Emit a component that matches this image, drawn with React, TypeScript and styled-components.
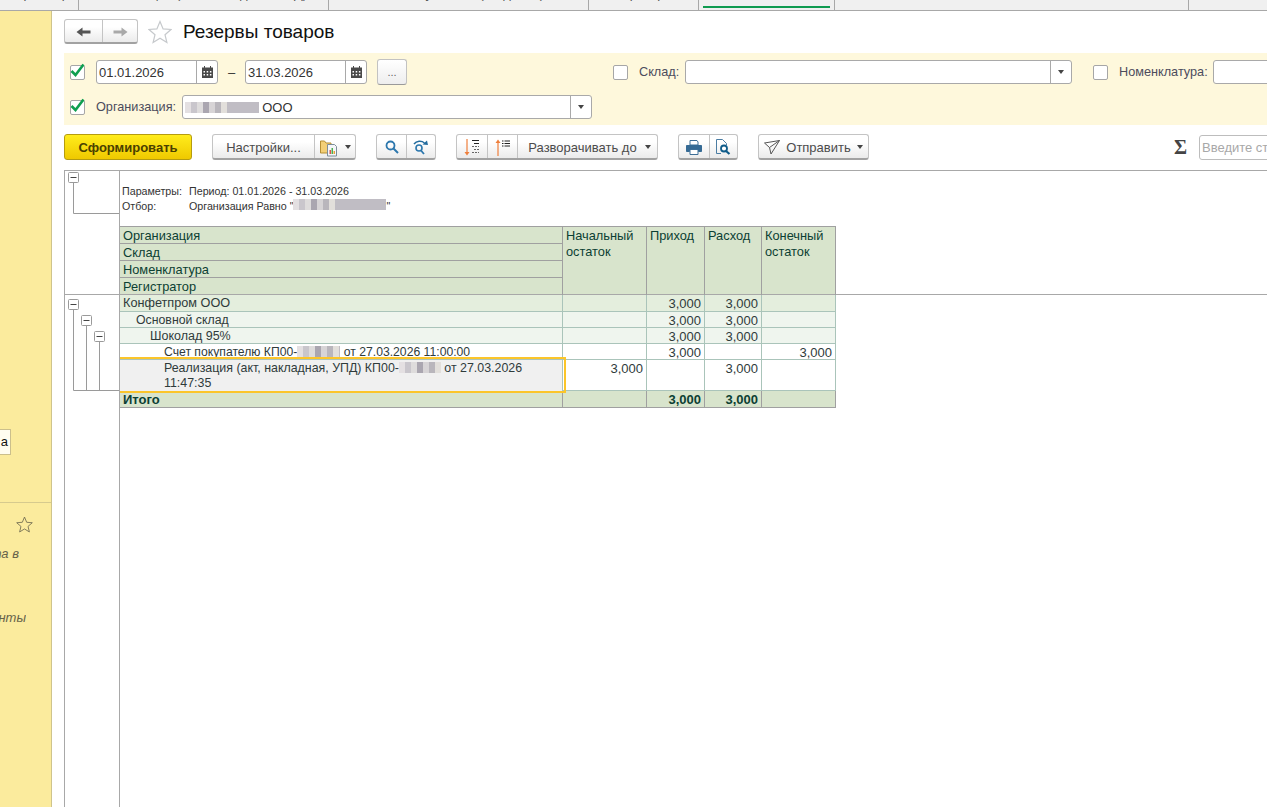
import React from "react";
import styled, { createGlobalStyle } from "styled-components";

const GlobalStyle = createGlobalStyle`
  html, body { margin: 0; padding: 0; background: #fff; }
  body { font-family: "Liberation Sans", Arial, sans-serif; font-size: 13px; }
`;

const Page = styled.div`
  width: 1267px;
  height: 807px;
  overflow: hidden;
  display: flex;
  flex-direction: column;
`;

/* tabs */
const TabStrip = styled.div`
  height: 11px;
  box-sizing: border-box;
  flex-shrink: 0;
  display: flex;
  background: #f0f0f0;
  border-bottom: 1px solid #a8a8a8;
  overflow: hidden;
`;
const Tab = styled.div<{ $w: number; $last?: boolean }>`
  width: ${(p) => p.$w}px;
  flex-shrink: 0;
  box-sizing: border-box;
  height: 10px;
  overflow: hidden;
  text-align: center;
  white-space: nowrap;
  color: #555;
  border-right: ${(p) => (p.$last ? "none" : "1px solid #a8a8a8")};
`;
const TabLabel = styled.div`
  margin-top: -13px;
  line-height: 13px;
`;
const ActiveBar = styled.div`
  height: 8px;
  box-sizing: border-box;
  margin: 0 4px;
  border-bottom: 2px solid #0f9b50;
`;

const Body = styled.div`
  flex: 1;
  display: flex;
  min-height: 0;
`;

/* left panel */
const Side = styled.aside`
  width: 52px;
  flex-shrink: 0;
  box-sizing: border-box;
  background: #fbeb9d;
  border-right: 1px solid #cfc48c;
  display: flex;
  flex-direction: column;
`;
const SideTop = styled.div`
  height: 492px;
  box-sizing: border-box;
  padding-top: 418px;
  border-bottom: 1px solid #d6ca8e;
`;
const Chip = styled.div`
  width: 11px;
  height: 26px;
  box-sizing: border-box;
  background: #fffdf0;
  border: 1px solid #cbbf8c;
  border-left: none;
  line-height: 24px;
  text-align: right;
  padding-right: 2px;
  color: #111;
`;
const SideStar = styled.div`
  display: flex;
  justify-content: flex-end;
  padding: 13px 18px 0 0;
`;
const SideText = styled.div<{ $w: number; $top: number }>`
  width: ${(p) => p.$w}px;
  margin-top: ${(p) => p.$top}px;
  overflow: hidden;
  direction: rtl;
  white-space: nowrap;
  font-style: italic;
  line-height: 15px;
  color: #66624a;
`;

/* main */
const Main = styled.main`
  flex: 1;
  min-width: 0;
  display: flex;
  flex-direction: column;
  padding: 8px 0 0 12px;
  overflow: hidden;
`;
const Heading = styled.div`
  display: flex;
  align-items: center;
  height: 25px;
  flex-shrink: 0;
`;
const Title = styled.h1`
  margin: 0 0 0 11px;
  font-size: 19px;
  font-weight: 400;
  line-height: 25px;
  color: #111;
`;
const StarSlot = styled.div`
  display: flex;
  margin-left: 10px;
`;

const Filters = styled.div`
  margin-top: 9px;
  height: 72px;
  box-sizing: border-box;
  flex-shrink: 0;
  padding: 7px 0 0 6px;
  background: #fef8dc;
  display: flex;
  flex-direction: column;
  gap: 11px;
`;
const FilterRow = styled.div`
  display: flex;
  align-items: center;
  height: 24px;
`;
const FilterGroup = styled.div<{ $w?: number }>`
  display: flex;
  align-items: center;
  flex-shrink: 0;
  width: ${(p) => (p.$w ? `${p.$w}px` : "auto")};
`;
const CheckBox = styled.div`
  width: 15px;
  height: 15px;
  flex-shrink: 0;
  box-sizing: border-box;
  margin-right: 11px;
  background: #fff;
  border: 1px solid #a6a6a6;
  border-radius: 2px;
  display: flex;
  align-items: center;
  justify-content: center;
`;
const Label = styled.span`
  color: #4c4c5c;
  font-size: 12.7px;
  white-space: nowrap;
  margin-right: 5.6px;
  padding-bottom: 1px;
`;
const Field = styled.div<{ $w?: number }>`
  height: 24px;
  box-sizing: border-box;
  flex: ${(p) => (p.$w ? "none" : "1")};
  width: ${(p) => (p.$w ? `${p.$w}px` : "auto")};
  display: flex;
  background: #fff;
  border: 1px solid #a9a9a9;
  border-radius: 3px;
`;
const FieldText = styled.div`
  flex: 1;
  padding-left: 2px;
  line-height: 23px;
  color: #333;
  white-space: nowrap;
  overflow: hidden;
`;
const Addon = styled.div`
  width: 20px;
  flex-shrink: 0;
  border-left: 1px solid #a9a9a9;
  display: flex;
  align-items: center;
  justify-content: center;
`;
const Dash = styled.span`
  width: 27px;
  text-align: center;
  color: #333;
`;
const MoreButton = styled.div`
  width: 30px;
  height: 26px;
  box-sizing: border-box;
  margin-left: 10px;
  text-align: center;
  line-height: 24px;
  color: #666;
  font-size: 11px;
  background: linear-gradient(#ffffff, #eeeeee);
  border: 1px solid #c2c2c2;
  border-bottom-color: #9a9a9a;
  border-radius: 3px;
`;
const Caret = styled.span`
  width: 0;
  height: 0;
  flex-shrink: 0;
  border-left: 3.5px solid transparent;
  border-right: 3.5px solid transparent;
  border-top: 4px solid #444;
`;

const Toolbar = styled.div`
  margin-top: 9px;
  height: 26px;
  flex-shrink: 0;
  display: flex;
  gap: 20px;
`;
const MainButton = styled.div`
  width: 128px;
  height: 26px;
  box-sizing: border-box;
  flex-shrink: 0;
  text-align: center;
  line-height: 26px;
  font-weight: 700;
  color: #4a4000;
  background: linear-gradient(#ffec1c, #efc900);
  border: 1px solid #b59c10;
  border-radius: 3px;
`;
const ButtonGroup = styled.div`
  display: flex;
  flex-shrink: 0;
  height: 26px;
  box-sizing: border-box;
  background: linear-gradient(#ffffff 30%, #ebebeb);
  border: 1px solid #c4c4c4;
  border-bottom: 2px solid #a2a2a2;
  border-radius: 3px;
`;
const GroupCell = styled.div<{ $w: number; $first?: boolean; $gap?: number; $shift?: number }>`
  width: ${(p) => p.$w}px;
  box-sizing: border-box;
  padding: 1px 0 0 ${(p) => p.$shift ?? 0}px;
  display: flex;
  align-items: center;
  justify-content: center;
  gap: ${(p) => p.$gap ?? 7}px;
  color: #4c4c4c;
  white-space: nowrap;
  border-left: ${(p) => (p.$first ? "none" : "1px solid #c4c4c4")};
`;
const SearchZone = styled.div`
  margin-left: 285px;
  display: flex;
  align-items: center;
  gap: 12px;
  flex-shrink: 0;
`;
const SigmaMark = styled.span`
  width: 13px;
  font-family: "Liberation Serif", serif;
  font-weight: 700;
  font-size: 20px;
  line-height: 24px;
  color: #444;
`;
const SearchInput = styled.input`
  width: 200px;
  height: 25px;
  box-sizing: border-box;
  padding: 0 2px;
  border: 1px solid #bdbdbd;
  border-radius: 3px;
  outline: none;
  font: 13px "Liberation Sans", Arial, sans-serif;
  &::placeholder { color: #a8a8a8; opacity: 1; }
`;

/* report */
const Report = styled.section`
  margin-top: 10px;
  flex: 1;
  min-height: 0;
  display: flex;
  flex-direction: column;
  border-left: 1px solid #a8a8a8;
  border-top: 1px solid #a8a8a8;
`;
const ReportHead = styled.div`
  height: 124px;
  flex-shrink: 0;
  box-sizing: border-box;
  display: flex;
  border-bottom: 1px solid #a8a8a8;
`;
const ReportBody = styled.div`
  flex: 1;
  display: flex;
`;
const Gutter = styled.div`
  width: 55px;
  flex-shrink: 0;
  box-sizing: border-box;
  border-right: 1px solid #a8a8a8;
`;
const TreeSvg = styled.svg`
  display: block;
`;
const HeadContent = styled.div`
  display: flex;
  flex-direction: column;
`;
const Params = styled.div`
  height: 55px;
  box-sizing: border-box;
  padding: 13px 0 0 2px;
  font-size: 10.7px;
  line-height: 15px;
  color: #333;
`;
const ParamLine = styled.div`
  display: flex;
  white-space: nowrap;
`;
const ParamName = styled.span`
  width: 67px;
`;
const COLS = "443px 84px 58px 57px 74px";
const HeaderGrid = styled.div`
  display: grid;
  grid-template-columns: ${COLS};
  grid-template-rows: repeat(4, 17px);
  height: 68px;
  box-sizing: border-box;
  font-size: 12.8px;
  background: #d8e4cc;
  border-top: 1px solid #a0a0a0;
  color: #0c3f33;
`;
const HeaderName = styled.div<{ $last?: boolean }>`
  grid-column: 1;
  box-sizing: border-box;
  padding-left: 3px;
  line-height: 17px;
  border-right: 1px solid #a0a0a0;
  border-bottom: ${(p) => (p.$last ? "none" : "1px solid #a0a0a0")};
`;
const HeaderColumn = styled.div<{ $col: number }>`
  grid-column: ${(p) => p.$col};
  grid-row: 1 / span 4;
  box-sizing: border-box;
  padding: 1px 3px 0;
  line-height: 16px;
  border-right: 1px solid #a0a0a0;
`;
const Row = styled.div<{ $h: number; $bg: string; $total?: boolean; $line?: string }>`
  position: relative;
  display: grid;
  grid-template-columns: ${COLS};
  height: ${(p) => p.$h}px;
  box-sizing: border-box;
  background: ${(p) => p.$bg};
  color: ${(p) => (p.$total ? "#0c3f33" : "#2f3b3b")};
  font-weight: ${(p) => (p.$total ? 700 : 400)};
  border-bottom: 1px solid ${(p) => p.$line || "#aac4ba"};
`;
const NameCell = styled.div<{ $level?: number; $bg?: string; $line?: string; $size?: number }>`
  box-sizing: border-box;
  padding: 1px 4px 0 ${(p) => 3 + (p.$level || 0)}px;
  font-size: ${(p) => p.$size || 13}px;
  line-height: 15px;
  background: ${(p) => p.$bg || "transparent"};
  border-right: 1px solid ${(p) => p.$line || "#aac4ba"};
`;
const NumCell = styled.div<{ $line?: string }>`
  box-sizing: border-box;
  padding: 1px 3px 0 0;
  line-height: 15px;
  text-align: right;
  border-right: 1px solid ${(p) => p.$line || "#aac4ba"};
`;
const Selection = styled.div`
  position: absolute;
  z-index: 1;
  top: -3px;
  left: 0;
  width: 446px;
  height: 36px;
  box-sizing: border-box;
  border: 2px solid #fbc52a;
  border-left: none;
`;
const Redacted = styled.span<{ $w: number }>`
  display: inline-block;
  width: ${(p) => p.$w}px;
  height: 11px;
  vertical-align: -1px;
  filter: blur(0.7px);
  background: linear-gradient(
    90deg,
    #e4e0e2 0 6px,
    #c9c6cc 6px 12px,
    #dedcdc 12px 18px,
    #aaa6b0 18px 24px,
    #d7d4d6 24px 30px,
    #b9b6bc 30px 36px,
    #e2dfdb 36px 42px,
    #c0bdc4 42px 48px
  );
`;

/* icons */
const Arrow = ({ back, color }: { back?: boolean; color: string }) => (
  <svg width="15" height="12" viewBox="0 0 15 12" style={back ? undefined : { transform: "scaleX(-1)" }}>
    <path d="M0.5 6 6.5 1.5V4.5H14.5V7.5H6.5V10.5Z" fill={color} />
  </svg>
);
const OutlineStar = ({ size, color }: { size: number; color: string }) => (
  <svg width={size} height={size} viewBox="0 0 24 24">
    <path d="M12 1.5 15.1 8.9 23 9.5 17 14.7 18.9 22.5 12 18.3 5.1 22.5 7 14.7 1 9.5 8.9 8.9Z" fill="none" stroke={color} strokeWidth="1.2" />
  </svg>
);
const Tick = () => (
  <svg width="15" height="15" viewBox="0 0 15 15" style={{ overflow: "visible", marginTop: -4 }}>
    <path d="M1.5 8 5.5 12 13.5 1.5" fill="none" stroke="#0f9f50" strokeWidth="2.6" />
  </svg>
);
const CalendarIcon = () => (
  <svg width="11" height="12" viewBox="0 0 11 12">
    <path d="M0 1.5H11V12H0Z" fill="#4a4a4a" />
    <path d="M2.5 0V2M8.5 0V2" stroke="#4a4a4a" />
    <path d="M1.5 5H3V6.5H1.5ZM4.7 5H6.2V6.5H4.7ZM7.9 5H9.4V6.5H7.9ZM1.5 8H3V9.5H1.5ZM4.7 8H6.2V9.5H4.7ZM7.9 8H9.4V9.5H7.9Z" fill="#fff" />
  </svg>
);
const ReportFolderIcon = () => (
  <svg width="18" height="19" viewBox="0 0 18 19">
    <path d="M0.5 3V15H11V5H6L4.5 3Z" fill="#f3cf76" stroke="#b58f35" />
    <path d="M7.5 6.5H14.5L16.5 8.5V18H7.5Z" fill="#f4f6f8" stroke="#7d8c99" />
    <path d="M9.5 12H11V16H9.5Z" fill="#d9534f" />
    <path d="M11.5 10H13V16H11.5Z" fill="#4caf50" />
    <path d="M13.5 13H15V16H13.5Z" fill="#e9a23b" />
  </svg>
);
const SearchIcon = () => (
  <svg width="14" height="14" viewBox="0 0 14 14">
    <circle cx="5.5" cy="5.5" r="4" fill="none" stroke="#2c77ad" strokeWidth="1.8" />
    <path d="M8.5 8.5 13 13" stroke="#2c77ad" strokeWidth="2" />
  </svg>
);
const RepeatSearchIcon = () => (
  <svg width="16" height="15" viewBox="0 0 16 15">
    <path d="M1 4C3.5 .8 8.500 .5 11.500 3" fill="none" stroke="#236c9e" strokeWidth="1.5" />
    <path d="M9.500 4.500 15 5 14 0.500Z" fill="#236c9e" />
    <circle cx="6" cy="8" r="3" fill="none" stroke="#2c77ad" strokeWidth="1.6" />
    <path d="M8 10.500 11 14" stroke="#2c77ad" strokeWidth="1.8" />
  </svg>
);
const SortDownIcon = () => (
  <svg width="16" height="17" viewBox="0 0 16 17">
    <path d="M3 0V14" stroke="#ef7f3c" strokeWidth="1.2" />
    <path d="M0.500 13H5.500L3 16.500Z" fill="#ef7f3c" />
    <path d="M8 1.500H15M10 4.500H15" stroke="#222" />
    <path d="M8 7.500H15M10 10.500H15M8 13.500H15" stroke="#666" strokeDasharray="2 1" />
  </svg>
);
const SortUpIcon = () => (
  <svg width="16" height="17" viewBox="0 0 16 17">
    <path d="M3 3V17" stroke="#ef7f3c" strokeWidth="1.2" />
    <path d="M0.500 4H5.500L3 0.500Z" fill="#ef7f3c" />
    <path d="M7 2H8.500M7 4.500H8.500M7 7H8.500" stroke="#222" />
    <path d="M9.500 2H15M9.500 4.500H15M9.500 7H15" stroke="#222" />
  </svg>
);
const PrintIcon = () => (
  <svg width="16" height="15" viewBox="0 0 16 15">
    <path d="M4 0.500H11L12 2V5H4Z" fill="#fff" stroke="#3d6e96" />
    <path d="M0.500 5.500H15.500V11.500H12.500V9H3.500V11.500H0.500Z" fill="#356a94" stroke="#356a94" />
    <path d="M4 9.500H12V14.500H4Z" fill="#fff" stroke="#3d6e96" />
  </svg>
);
const PreviewIcon = () => (
  <svg width="15" height="16" viewBox="0 0 15 16">
    <path d="M0.500 0.500H6.500L10.500 4.500V6M5 14.500H0.500V0.500" fill="none" stroke="#4b7da3" />
    <circle cx="8" cy="9.500" r="3" fill="#fff" stroke="#0f5c8a" strokeWidth="1.800" />
    <path d="M10 12 13.500 15" stroke="#0f5c8a" strokeWidth="2.200" />
  </svg>
);
const SendIcon = () => (
  <svg width="16" height="15" viewBox="0 0 16 15">
    <path d="M0.500 3 15.500 0.500 7 14 5.500 7.500ZM5.500 7.500 15.500 0.500" fill="none" stroke="#555" />
  </svg>
);

const TreeBox = ({ x, y }: { x: number; y: number }) => (
  <g>
    <rect x={x + 0.5} y={y + 0.5} width="10" height="10" rx="1" fill="#fff" stroke="#9a9a9a" />
    <path d={`M${x + 2.5} ${y + 5.5}H${x + 8.5}`} stroke="#444" />
  </g>
);

const Header = () => (
  <HeaderGrid>
    <HeaderName>Организация</HeaderName>
    <HeaderColumn $col={2}>Начальный<br />остаток</HeaderColumn>
    <HeaderColumn $col={3}>Приход</HeaderColumn>
    <HeaderColumn $col={4}>Расход</HeaderColumn>
    <HeaderColumn $col={5}>Конечный<br />остаток</HeaderColumn>
    <HeaderName>Склад</HeaderName>
    <HeaderName>Номенклатура</HeaderName>
    <HeaderName $last>Регистратор</HeaderName>
  </HeaderGrid>
);

const groups = [
  { name: "Конфетпром ООО", level: 0, bg: "#e4eedd", h: 17, size: 12.7 },
  { name: "Основной склад", level: 13, bg: "#eff5ee", h: 16, size: 12.3 },
  { name: "Шоколад 95%", level: 27, bg: "#eff5ee", h: 16, size: 12.5 },
];

const Nums = ({ values, line }: { values: string[]; line?: string }) => (
  <>
    {values.map((v, i) => (
      <NumCell key={i} $line={line}>{v}</NumCell>
    ))}
  </>
);

const App: React.FC = () => (
  <Page>
    <GlobalStyle />
    <TabStrip>
      <Tab $w={79}><TabLabel>Сверка партнеров</TabLabel></Tab>
      <Tab $w={250}><TabLabel>Реализация (акт, накладная, УПД)</TabLabel></Tab>
      <Tab $w={260}><TabLabel>Счет покупателю (создание)</TabLabel></Tab>
      <Tab $w={110}><TabLabel>Партнеры</TabLabel></Tab>
      <Tab $w={136}><ActiveBar /></Tab>
      <Tab $w={354}><TabLabel>Остатки</TabLabel></Tab>
      <Tab $w={78} $last />
    </TabStrip>
    <Body>
      <Side>
        <SideTop>
          <Chip>а</Chip>
        </SideTop>
        <SideStar>
          <OutlineStar size={17} color="#6f6a50" />
        </SideStar>
        <SideText $w={19} $top={13}>та в</SideText>
        <SideText $w={26} $top={49}>нты</SideText>
      </Side>
      <Main>
        <Heading>
          <ButtonGroup style={{ height: 25 }}>
            <GroupCell $w={37} $first><Arrow back color="#555" /></GroupCell>
            <GroupCell $w={35}><Arrow color="#a9a9a9" /></GroupCell>
          </ButtonGroup>
          <StarSlot><OutlineStar size={24} color="#c6c9cc" /></StarSlot>
          <Title>Резервы товаров</Title>
        </Heading>

        <Filters>
          <FilterRow>
            <FilterGroup $w={543}>
              <CheckBox><Tick /></CheckBox>
              <Field $w={122}>
                <FieldText>01.01.2026</FieldText>
                <Addon><CalendarIcon /></Addon>
              </Field>
              <Dash>–</Dash>
              <Field $w={122}>
                <FieldText>31.03.2026</FieldText>
                <Addon><CalendarIcon /></Addon>
              </Field>
              <MoreButton>...</MoreButton>
            </FilterGroup>
            <FilterGroup $w={459}>
              <CheckBox />
              <Label>Склад:</Label>
              <Field>
                <FieldText />
                <Addon><Caret /></Addon>
              </Field>
            </FilterGroup>
            <FilterGroup style={{ marginLeft: 21 }}>
              <CheckBox />
              <Label>Номенклатура:</Label>
              <Field $w={120}><FieldText /></Field>
            </FilterGroup>
          </FilterRow>
          <FilterRow>
            <FilterGroup>
              <CheckBox><Tick /></CheckBox>
              <Label>Организация:</Label>
              <Field $w={410}>
                <FieldText><Redacted $w={74} /> ООО</FieldText>
                <Addon><Caret /></Addon>
              </Field>
            </FilterGroup>
          </FilterRow>
        </Filters>

        <Toolbar>
          <MainButton>Сформировать</MainButton>
          <ButtonGroup>
            <GroupCell $w={101} $first>Настройки...</GroupCell>
            <GroupCell $w={41}><ReportFolderIcon /><Caret /></GroupCell>
          </ButtonGroup>
          <ButtonGroup>
            <GroupCell $w={29} $first><SearchIcon /></GroupCell>
            <GroupCell $w={29}><RepeatSearchIcon /></GroupCell>
          </ButtonGroup>
          <ButtonGroup>
            <GroupCell $w={30} $first><SortDownIcon /></GroupCell>
            <GroupCell $w={30}><SortUpIcon /></GroupCell>
            <GroupCell $w={140} $gap={8} $shift={4}>Разворачивать до<Caret /></GroupCell>
          </ButtonGroup>
          <ButtonGroup>
            <GroupCell $w={30} $first><PrintIcon /></GroupCell>
            <GroupCell $w={28}><PreviewIcon /></GroupCell>
          </ButtonGroup>
          <ButtonGroup>
            <GroupCell $w={109} $first $gap={6}><SendIcon />Отправить<Caret /></GroupCell>
          </ButtonGroup>
          <SearchZone>
            <SigmaMark>Σ</SigmaMark>
            <SearchInput placeholder="Введите строку для поиска" readOnly />
          </SearchZone>
        </Toolbar>

        <Report>
          <ReportHead>
            <Gutter>
              <TreeSvg width="54" height="50">
                <path d="M8.500 12V42.500H54" fill="none" stroke="#9a9a9a" />
                <TreeBox x={3} y={1} />
              </TreeSvg>
            </Gutter>
            <HeadContent>
              <Params>
                <ParamLine><ParamName>Параметры:</ParamName>Период: 01.01.2026 - 31.03.2026</ParamLine>
                <ParamLine><ParamName>Отбор:</ParamName>Организация Равно "<Redacted $w={93} />"</ParamLine>
              </Params>
              <Header />
            </HeadContent>
          </ReportHead>
          <ReportBody>
            <Gutter>
              <TreeSvg width="54" height="100">
                <path d="M8.500 15V95.500H54M21.500 31V95.500M34.500 47V95.500" fill="none" stroke="#9a9a9a" />
                <TreeBox x={3} y={4} />
                <TreeBox x={16} y={20} />
                <TreeBox x={29} y={36} />
              </TreeSvg>
            </Gutter>
            <div>
              {groups.map((g) => (
                <Row key={g.name} $h={g.h} $bg={g.bg}>
                  <NameCell $level={g.level} $size={g.size}>{g.name}</NameCell>
                  <Nums values={["", "3,000", "3,000", ""]} />
                </Row>
              ))}
              <Row $h={16} $bg="#fff">
                <NameCell $level={41} $size={12.2}>Счет покупателю КП00-<Redacted $w={43} /> от 27.03.2026 11:00:00</NameCell>
                <Nums values={["", "3,000", "", "3,000"]} />
              </Row>
              <Row $h={31} $bg="#fff">
                <NameCell $level={41} $size={12.4} $bg="#f0f0f0">
                  Реализация (акт, накладная, УПД) КП00-<Redacted $w={42} /> от 27.03.2026 11:47:35
                </NameCell>
                <Nums values={["3,000", "", "3,000", ""]} />
                <Selection />
              </Row>
              <Row $h={17} $bg="#d8e4cc" $total $line="#a0a0a0">
                <NameCell $line="#a0a0a0">Итого</NameCell>
                <Nums values={["", "3,000", "3,000", ""]} line="#a0a0a0" />
              </Row>
            </div>
          </ReportBody>
        </Report>
      </Main>
    </Body>
  </Page>
);

export default App;
